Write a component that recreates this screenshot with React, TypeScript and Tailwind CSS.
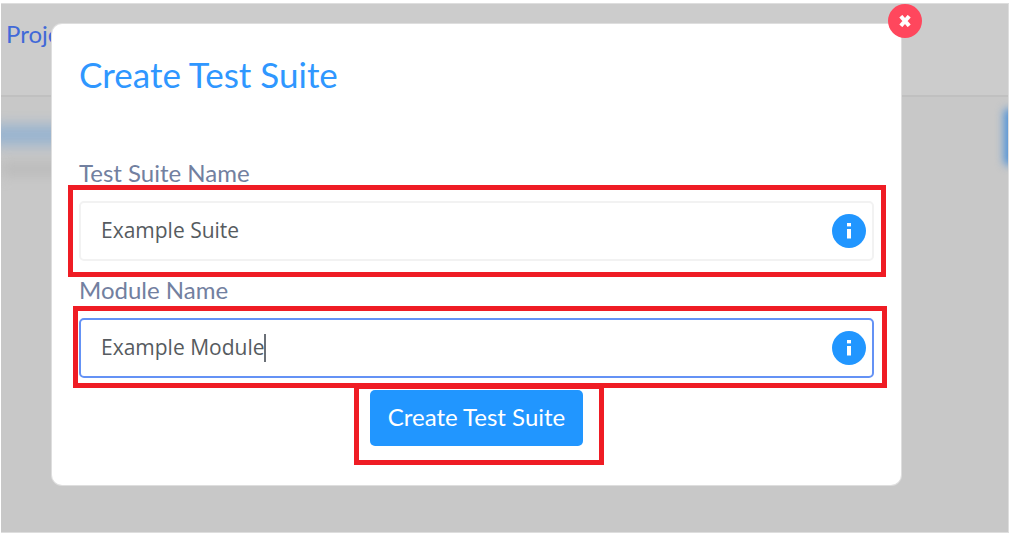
import { useState } from "react";

function InfoIcon() {
  return (
    <svg viewBox="0 0 34 34" className="size-[34px]" aria-hidden="true">
      <circle cx="17" cy="17" r="17" fill="#2196ff" />
      <rect x="15" y="9" width="4" height="3.4" fill="#fff" />
      <rect x="15" y="15" width="4" height="9.5" fill="#fff" />
    </svg>
  );
}

type FieldProps = {
  id: string;
  label: string;
  initial: string;
  active?: boolean;
  highlight: string;
};

function Field({ id, label, initial, active, highlight }: FieldProps) {
  const [value, setValue] = useState(initial);
  return (
    <div className="flex flex-col">
      <label htmlFor={id} className="pb-[13px] text-[24px] leading-[30px] text-[#7280a0]">
        {label}
      </label>
      <div className="relative">
        <input
          id={id}
          type="text"
          value={value}
          onChange={(e) => setValue(e.target.value)}
          className={
            "block h-[60px] w-full rounded-[5px] pr-14 pb-[3px] pl-5 font-['Open_Sans',sans-serif] text-[21px] text-[#565b60] outline-none " +
            (active ? "border-2 border-[#6492f5]" : "border-2 border-[#f2f2f2]")
          }
        />
        {active && (
          <span className="pointer-events-none absolute top-4 left-[185px] h-7 w-[2px] bg-[#6b7077]" />
        )}
        <button
          type="button"
          aria-label={"About " + label}
          className="absolute top-[13px] right-2 size-[34px] rounded-full"
        >
          <InfoIcon />
        </button>
        <span className={"pointer-events-none absolute border-5 border-[#ef1c24] " + highlight} />
      </div>
    </div>
  );
}

export default function App() {
  return (
    <div className="min-h-screen bg-white pt-[3px] pl-px font-['Lato','Open_Sans',sans-serif]">
      <div className="relative flex min-h-[calc(100vh-3px)] flex-col overflow-hidden border-t border-r border-b border-[#dedede] bg-[#c8c8c8]">
        <header className="h-[93px] border-b-2 border-[#c0c0c0] bg-[#cccccc] px-[5px] pt-[15px]">
          <a href="#projects" className="text-[24px] leading-[30px] text-[#4169d8]">
            Projects
          </a>
        </header>
        <div className="relative flex items-start justify-between pt-3">
          <div className="absolute top-16 left-0 h-4 w-40 bg-[#bcbcbc] blur-[6px]" />
          <div className="mt-4 -ml-3 h-5 w-24 rounded bg-[#96b3d0] blur-[7px]" />
          <div className="-mr-[42px] h-14 w-[46px] rounded bg-[#4f93d8] blur-[4px]" />
        </div>

        <div className="absolute inset-0 pt-5 pr-[107px] pb-12 pl-[51px]">
          <section
            role="dialog"
            aria-labelledby="dialog-title"
            className="relative rounded-[10px] bg-white pt-[30px] pr-[27px] pb-[39px] pl-[27px] ring-1 ring-[#dedede]"
          >
            <h1 id="dialog-title" className="text-[35px] leading-[40px] font-normal text-[#2f97ff]">
              Create Test Suite
            </h1>
            <button
              type="button"
              aria-label="Close"
              className="absolute -top-5 -right-[21px] flex size-[34px] items-center justify-center rounded-full bg-[#ff475d]"
            >
              <svg viewBox="0 0 12 12" className="size-3" aria-hidden="true">
                <path d="M1.8 1.2L10.2 10.8M10.2 1.2L1.8 10.8" stroke="#fff" strokeWidth="4" />
              </svg>
            </button>
            <form className="flex flex-col pt-16" onSubmit={(e) => e.preventDefault()}>
              <div className="flex flex-col gap-[14px]">
                <Field
                  id="suite-name"
                  label="Test Suite Name"
                  initial="Example Suite"
                  highlight="-top-4 -bottom-4 -left-[11px] -right-3"
                />
                <Field
                  id="module-name"
                  label="Module Name"
                  initial="Example Module"
                  active
                  highlight="-top-3 -bottom-[10px] -left-[6px] -right-[13px]"
                />
              </div>
              <div className="flex justify-center pt-3">
                <div className="relative">
                  <button
                    type="submit"
                    className="h-14 rounded-[5px] bg-[#2196ff] px-[18px] pb-[2px] text-[24px] leading-[30px] text-white"
                  >
                    Create Test Suite
                  </button>
                  <span className="pointer-events-none absolute -top-[6px] -right-[21px] -bottom-[19px] -left-4 border-5 border-[#ef1c24]" />
                </div>
              </div>
            </form>
          </section>
        </div>
      </div>
    </div>
  );
}
